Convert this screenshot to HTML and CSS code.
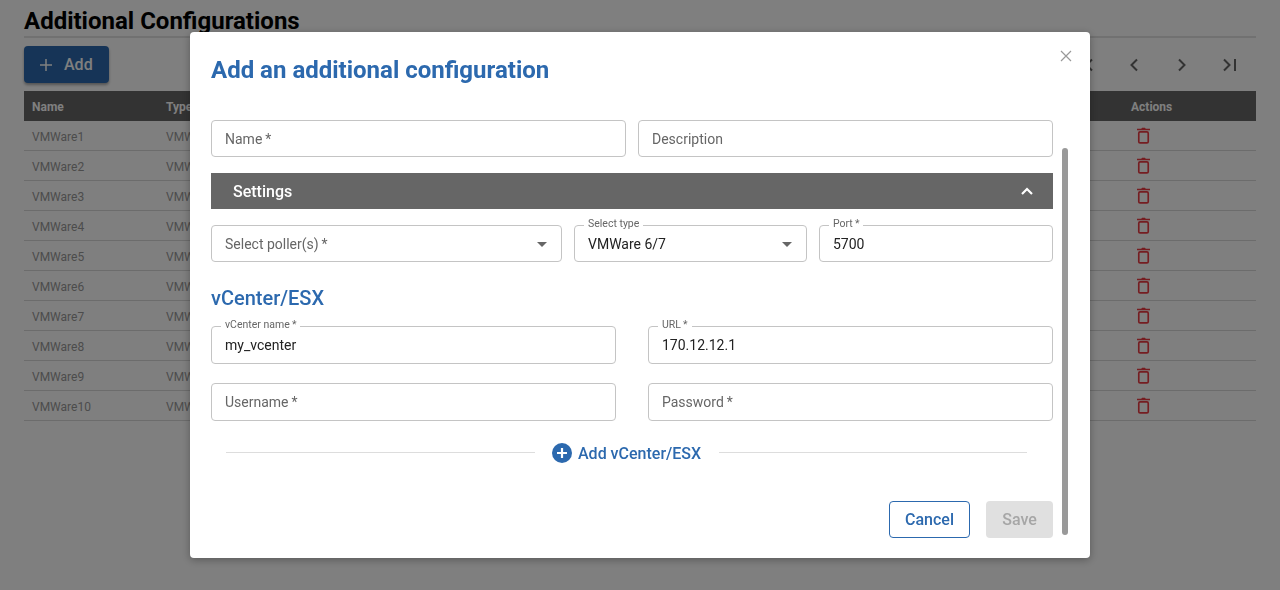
FILE: index.html

```html
<!DOCTYPE html>
<html lang="en">
<head>
<meta charset="utf-8"/>
<meta content="width=device-width, initial-scale=1.0" name="viewport"/>
<title>Additional Configurations</title>
<link rel="stylesheet" href="styles.css">
</head>
<body>
<svg class="icon-defs" width="0" height="0">
  <symbol id="trash" viewBox="0 0 14 18">
    <path d="M4.6 1.6 5.4.6h3.2l.8 1H14v1.7H0V1.6z" fill="currentColor"/>
    <rect x="1.9" y="5.1" width="10.2" height="11.9" rx="1.4" fill="none" stroke="currentColor" stroke-width="1.8"/>
  </symbol>
</svg>

<div class="page">
  <h1>Additional Configurations</h1>
  <div class="toolbar">
    <button class="add-btn">
      <svg width="14" height="14" viewBox="0 0 14 14"><path d="M7 1v12M1 7h12" stroke="currentColor" stroke-width="1.5" fill="none"/></svg>
      Add
    </button>
    <div class="pager">
      <svg width="24" height="24" viewBox="0 0 24 24"><path d="M18 6.500 12.500 12l5.500 5.500M7 6v12" stroke="currentColor" stroke-width="2" fill="none"/></svg>
      <svg width="24" height="24" viewBox="0 0 24 24"><path d="M15 6.500 9.500 12l5.500 5.500" stroke="currentColor" stroke-width="2" fill="none"/></svg>
      <svg width="24" height="24" viewBox="0 0 24 24"><path d="M9 6.500 14.500 12 9 17.500" stroke="currentColor" stroke-width="2" fill="none"/></svg>
      <svg width="24" height="24" viewBox="0 0 24 24"><path d="M6 6.500 11.500 12 6 17.500M17 6v12" stroke="currentColor" stroke-width="2" fill="none"/></svg>
    </div>
  </div>
  <div class="table">
    <div class="row head"><span>Name</span><span>Type</span><span>Actions</span></div>
    <div class="row"><span>VMWare1</span><span>VMWare</span><svg class="trash"><use href="#trash"/></svg></div>
    <div class="row"><span>VMWare2</span><span>VMWare</span><svg class="trash"><use href="#trash"/></svg></div>
    <div class="row"><span>VMWare3</span><span>VMWare</span><svg class="trash"><use href="#trash"/></svg></div>
    <div class="row"><span>VMWare4</span><span>VMWare</span><svg class="trash"><use href="#trash"/></svg></div>
    <div class="row"><span>VMWare5</span><span>VMWare</span><svg class="trash"><use href="#trash"/></svg></div>
    <div class="row"><span>VMWare6</span><span>VMWare</span><svg class="trash"><use href="#trash"/></svg></div>
    <div class="row"><span>VMWare7</span><span>VMWare</span><svg class="trash"><use href="#trash"/></svg></div>
    <div class="row"><span>VMWare8</span><span>VMWare</span><svg class="trash"><use href="#trash"/></svg></div>
    <div class="row"><span>VMWare9</span><span>VMWare</span><svg class="trash"><use href="#trash"/></svg></div>
    <div class="row"><span>VMWare10</span><span>VMWare</span><svg class="trash"><use href="#trash"/></svg></div>
  </div>
</div>

<div class="overlay">
  <div class="modal">
    <svg class="close" width="12" height="12" viewBox="0 0 12 12"><path d="M1 1l10 10M11 1 1 11" stroke="currentColor" stroke-width="1.200" fill="none"/></svg>
    <div class="scrollbar"></div>

    <h2>Add an additional configuration</h2>

    <div class="fields two">
      <div class="field placeholder">Name&thinsp;*</div>
      <div class="field placeholder">Description</div>
    </div>

    <div class="settings">
      <span>Settings</span>
      <svg width="14" height="9" viewBox="0 0 14 9"><path d="M2 7l5-5 5 5" stroke="currentColor" stroke-width="2.200" fill="none"/></svg>
    </div>

    <div class="fields three">
      <div class="field placeholder">Select poller(s)&thinsp;*<i class="caret"></i></div>
      <div class="field"><label>Select type</label>VMWare 6/7<i class="caret"></i></div>
      <div class="field"><label>Port&thinsp;*</label>5700</div>
    </div>

    <h3>vCenter/ESX</h3>

    <div class="fields vcenter">
      <div class="field"><label>vCenter name&thinsp;*</label>my_vcenter</div>
      <div class="field"><label>URL&thinsp;*</label>170.12.12.1</div>
      <div class="field placeholder">Username&thinsp;*</div>
      <div class="field placeholder">Password&thinsp;*</div>
    </div>

    <div class="add-row">
      <hr class="rule-left"/>
      <span class="add-link">
        <svg width="20" height="20" viewBox="0 0 20 20"><circle cx="10" cy="10" r="10" fill="currentColor"/><path d="M10 5v10M5 10h10" stroke="#fff" stroke-width="2.200"/></svg>
        Add vCenter/ESX
      </span>
      <hr/>
    </div>

    <div class="footer">
      <button class="cancel">Cancel</button>
      <button class="save">Save</button>
    </div>
  </div>
</div>
</body>
</html>
```

FILE: styles.css

```css
* {
  box-sizing: border-box;
}
body {
  margin: 0;
  font-family: Roboto, "Liberation Sans", sans-serif;
  background: #fff;
  overflow: hidden;
}
.icon-defs {
  position: absolute;
}
.page {
  padding: 0 24px;
}
h1 {
  margin: 0;
  height: 38px;
  padding-top: 6px;
  font-size: 24px;
  line-height: 30px;
  font-weight: 700;
  color: #000;
  border-bottom: 2px solid #e2e2e2;
  white-space: nowrap;
}
.toolbar {
  display: flex;
  justify-content: space-between;
  align-items: center;
  margin-top: 8px;
  height: 37px;
}
.add-btn {
  display: flex;
  align-items: center;
  gap: 11px;
  width: 85px;
  height: 37px;
  padding: 0 0 0 15px;
  border: none;
  border-radius: 4px;
  background: #2c69ae;
  color: #fff;
  font: 500 16px Roboto, sans-serif;
  box-shadow: 0 2px 3px rgba(0, 0, 0, 0.35);
}
.pager {
  display: flex;
  gap: 24px;
  margin-right: 14px;
  color: #666;
}
.table {
  margin-top: 8px;
  font-size: 12px;
  color: #999;
}
.row {
  display: grid;
  grid-template-columns: 134px 965px 1fr;
  align-items: center;
  height: 30px;
  padding: 2px 0 0 8px;
  border-bottom: 1px solid #d8d8d8;
}
.row.head {
  padding-top: 1px;
  background: #666;
  color: #fff;
  font-weight: 700;
  border-bottom: none;
}
.trash {
  width: 13px;
  height: 17px;
  margin: 0 0 3px 6px;
  color: #ea3a42;
}
.overlay {
  position: fixed;
  inset: 0;
  display: flex;
  align-items: center;
  justify-content: center;
  background: rgba(0, 0, 0, 0.5);
}
.modal {
  position: relative;
  width: 900px;
  height: 526px;
  padding: 21px 37px 0 21px;
  background: #fff;
  border-radius: 4px;
  box-shadow: 0 2px 8px rgba(0, 0, 0, 0.3);
}
.close {
  position: absolute;
  top: 18px;
  right: 18px;
  color: #999;
}
.scrollbar {
  position: absolute;
  top: 116px;
  right: 22px;
  width: 6px;
  height: 387px;
  border-radius: 3px;
  background: #999;
}
h2 {
  margin: 0 0 33px;
  font-size: 24px;
  line-height: 34px;
  font-weight: 700;
  color: #2c69ae;
}
.fields {
  display: grid;
  height: 37px;
  margin-bottom: 16px;
}
.two {
  grid-template-columns: 1fr 1fr;
  gap: 12px;
}
.three {
  grid-template-columns: 351px 233px 1fr;
  gap: 12px;
  margin-bottom: 0;
}
.vcenter {
  grid-template-columns: 1fr 1fr;
  grid-auto-rows: 38px;
  gap: 19px 32px;
  height: auto;
  margin-bottom: 0;
}
.field {
  position: relative;
  display: flex;
  align-items: center;
  padding: 0 13px;
  border: 1px solid #c4c4c4;
  border-radius: 4px;
  font-size: 14px;
  color: #222;
  white-space: nowrap;
}
.placeholder {
  color: #666;
}
.field label {
  position: absolute;
  top: -8px;
  left: 9px;
  padding: 0 4px;
  font-size: 10.5px;
  line-height: 12px;
  color: #666;
  background: #fff;
}
.caret {
  position: absolute;
  right: 14px;
  top: 16px;
  border-left: 5px solid transparent;
  border-right: 5px solid transparent;
  border-top: 5px solid #666;
}
.settings {
  display: flex;
  align-items: center;
  justify-content: space-between;
  height: 36px;
  margin-bottom: 16px;
  padding: 0 19px 0 22px;
  background: #666;
  color: #fff;
  font-size: 16px;
  font-weight: 500;
}
h3 {
  margin: 24px 0 16px;
  font-size: 20px;
  line-height: 24px;
  font-weight: 500;
  color: #2c69ae;
}
.add-row {
  display: flex;
  align-items: center;
  gap: 17px;
  height: 24px;
  margin: 20px 26px 0 15px;
}
.add-row hr {
  flex: 1;
  margin: 0 0 2px;
  border: none;
  border-top: 1px solid #ddd;
}
.add-row .rule-left {
  flex: 0 0 309px;
}
.add-link {
  display: flex;
  align-items: center;
  gap: 6px;
  margin-right: 1px;
  color: #2c69ae;
  font-size: 16px;
  font-weight: 500;
  white-space: nowrap;
}
.footer {
  display: flex;
  justify-content: flex-end;
  gap: 16px;
  margin-top: 36px;
}
.footer button {
  height: 37px;
  border-radius: 4px;
  font: 500 16px Roboto, sans-serif;
}
.cancel {
  width: 81px;
  background: #fff;
  color: #2c69ae;
  border: 1px solid #2c69ae;
}
.save {
  width: 67px;
  background: #e0e0e0;
  color: #a6a6a6;
  border: none;
}
```
